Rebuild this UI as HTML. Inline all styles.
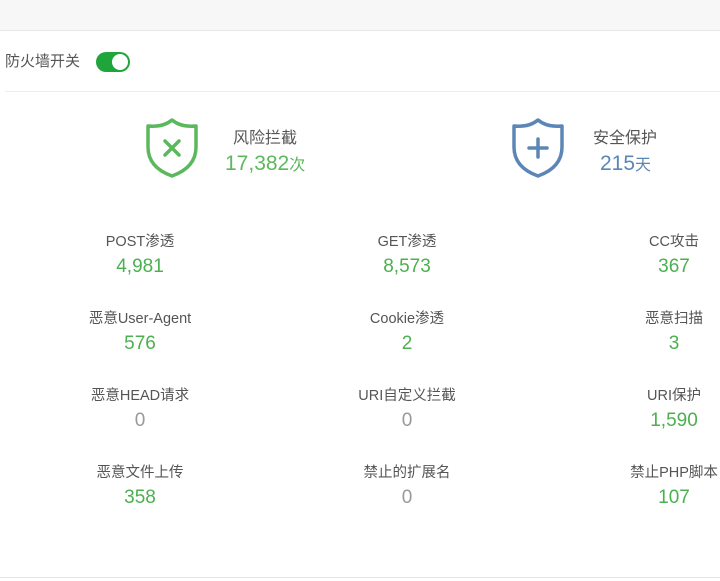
<!DOCTYPE html>
<html><head><meta charset="utf-8"><style>
body{margin:0;width:720px;height:581px;overflow:hidden;background:#fff;font-family:"Liberation Sans","Noto Sans CJK SC",sans-serif;position:relative}
.top{position:absolute;left:0;top:0;width:720px;height:30px;background:#f7f7f7;border-bottom:1px solid #e8e8e8}
.sw{position:absolute;left:5px;top:52px;font-size:15px;color:#555;line-height:20px}
.tg{position:absolute;left:96px;top:52px;width:34px;height:20px;border-radius:10px;background:#20a53a}
.tg i{position:absolute;right:2px;top:2px;width:16px;height:16px;border-radius:50%;background:#fff}
.hr{position:absolute;left:5px;top:91px;width:715px;height:1px;background:#eee}
.bt{position:absolute;left:0;top:577px;width:720px;height:1px;background:#e5e5e5}
.t{position:absolute;font-size:16px;color:#555}
.n{position:absolute;font-size:21px}
.n small{font-size:16px}
.c{position:absolute;width:200px;text-align:center}
.c .l{font-size:14.5px;color:#555;line-height:18px}
.c .v{font-size:19px;color:#4cb050;line-height:22px;margin-top:5px}
.c .v.z{color:#999}
</style></head><body>
<div class="top"></div>
<div class="sw">防火墙开关</div><div class="tg"><i></i></div>
<div class="hr"></div>
<svg style="position:absolute;left:144px;top:117px" width="56" height="62" viewBox="0 0 56 62"><path d="M28 3 C22 8 14 10 4 9 V30 C4 45 14 54 28 59 C42 54 52 45 52 30 V9 C42 10 34 8 28 3Z" fill="none" stroke="#5cb85c" stroke-width="3.5" stroke-linejoin="round"/><path d="M21 24 L35 38 M35 24 L21 38" stroke="#5cb85c" stroke-width="3.5" stroke-linecap="round"/></svg>
<div class="t" style="left:233px;top:124px">风险拦截</div>
<div class="n" style="left:225px;top:151px;color:#5cb85c">17,382<small>次</small></div>
<svg style="position:absolute;left:510px;top:117px" width="56" height="62" viewBox="0 0 56 62"><path d="M28 3 C22 8 14 10 4 9 V30 C4 45 14 54 28 59 C42 54 52 45 52 30 V9 C42 10 34 8 28 3Z" fill="none" stroke="#5b86b6" stroke-width="3.5" stroke-linejoin="round"/><path d="M28 22 V40 M19 31 H37" stroke="#5b86b6" stroke-width="3.5" stroke-linecap="round"/></svg>
<div class="t" style="left:593px;top:124px">安全保护</div>
<div class="n" style="left:600px;top:151px;color:#5b86b6">215<small>天</small></div>

<div class="c" style="left:40px;top:233px"><div class="l">POST渗透</div><div class="v">4,981</div></div>
<div class="c" style="left:307px;top:233px"><div class="l">GET渗透</div><div class="v">8,573</div></div>
<div class="c" style="left:574px;top:233px"><div class="l">CC攻击</div><div class="v">367</div></div>
<div class="c" style="left:40px;top:310px"><div class="l">恶意User-Agent</div><div class="v">576</div></div>
<div class="c" style="left:307px;top:310px"><div class="l">Cookie渗透</div><div class="v">2</div></div>
<div class="c" style="left:574px;top:310px"><div class="l">恶意扫描</div><div class="v">3</div></div>
<div class="c" style="left:40px;top:387px"><div class="l">恶意HEAD请求</div><div class="v z">0</div></div>
<div class="c" style="left:307px;top:387px"><div class="l">URI自定义拦截</div><div class="v z">0</div></div>
<div class="c" style="left:574px;top:387px"><div class="l">URI保护</div><div class="v">1,590</div></div>
<div class="c" style="left:40px;top:464px"><div class="l">恶意文件上传</div><div class="v">358</div></div>
<div class="c" style="left:307px;top:464px"><div class="l">禁止的扩展名</div><div class="v z">0</div></div>
<div class="c" style="left:574px;top:464px"><div class="l">禁止PHP脚本</div><div class="v">107</div></div>
<div class="bt"></div>
</body></html>
